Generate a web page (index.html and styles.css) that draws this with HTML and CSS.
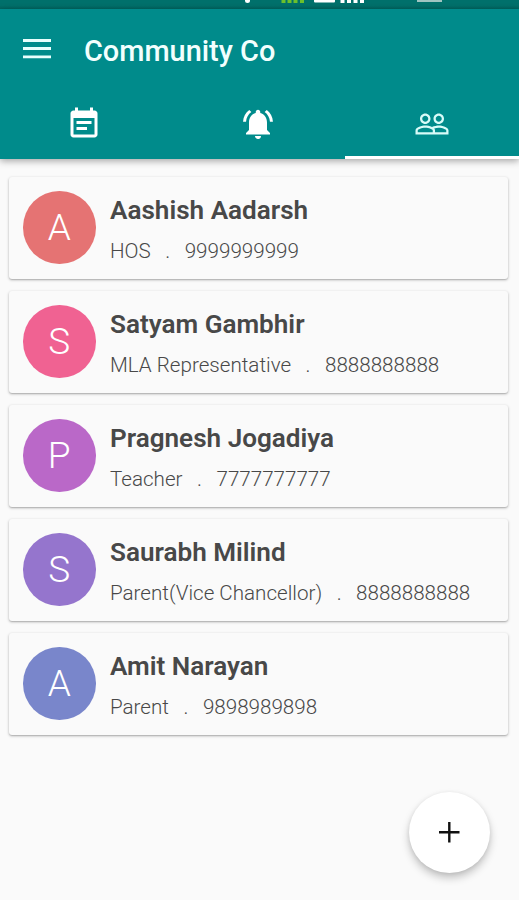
FILE: index.html
```html
<!DOCTYPE html>
<html lang="en">

<head>
    <meta charset="UTF-8">
    <meta name="viewport" content="width=device-width, initial-scale=1.0">
    <title>Community Co</title>
    <link rel="stylesheet" href="styles.css">
</head>

<body>
    <div class="status-bar">
        <svg width="519" height="9" viewBox="0 0 519 9">
            <circle cx="247.500" cy="0.500" r="2.500" fill="#fff"/>
            <path d="M283.500 0v3M289.500 0v3M295.500 0v3M302 0v3" stroke="#6cc02c" stroke-width="4"/>
            <path d="M314 0h21v1.500q0 1-1 1h-19q-1 0-1-1z" fill="#fff"/>
            <path d="M342.500 0v3M349 0v3M355.500 0v3M362 0v3" stroke="#fff" stroke-width="4"/>
            <rect x="417" y="0" width="25" height="2" fill="#9fc4c1"/>
        </svg>
    </div>

    <header class="header">
        <div class="toolbar">
            <svg class="menu-icon" width="28" height="21" viewBox="0 0 28 21">
                <path d="M0 2.500h28M0 10.500h28M0 18.800h28" stroke="#e8fffd" stroke-width="2.800"/>
            </svg>
            <h1>Community Co</h1>
        </div>
        <nav class="tabs">
            <a class="tab">
                <svg width="36" height="36" viewBox="0 0 24 24" fill="#fff">
                    <path d="M17 10H7v2h10v-2zm2-7h-1V1h-2v2H8V1H6v2H5c-1.110 0-1.990.9-1.990 2L3 19c0 1.100.89 2 2 2h14c1.100 0 2-.9 2-2V5c0-1.100-.9-2-2-2zm0 16H5V8h14v11zm-5-5H7v2h7v-2z"/>
                </svg>
            </a>
            <a class="tab">
                <svg width="36" height="36" viewBox="0 0 24 24" fill="#fff">
                    <path d="M7.580 4.080L6.150 2.650C3.750 4.480 2.170 7.300 2.030 10.500h2c.15-2.650 1.510-4.970 3.550-6.420zm12.390 6.420h2c-.15-3.200-1.730-6.020-4.120-7.850l-1.420 1.430c2.020 1.450 3.390 3.770 3.540 6.420zM18 11c0-3.070-1.640-5.640-4.500-6.320V4c0-.83-.67-1.500-1.500-1.500s-1.500.67-1.500 1.500v.68C7.630 5.360 6 7.920 6 11v5l-2 2v1h16v-1l-2-2v-5zm-6 11c.14 0 .27-.01.4-.04.65-.14 1.180-.58 1.440-1.180.1-.24.15-.5.15-.78h-4c.01 1.100.9 2 2.010 2z"/>
                </svg>
            </a>
            <a class="tab active">
                <svg width="36" height="36" viewBox="0 0 24 24" fill="#d8fbf8">
                    <path d="M16.500 13c-1.200 0-3.070.34-4.500 1-1.430-.67-3.300-1-4.500-1C5.330 13 1 14.080 1 16.250V19h22v-2.750c0-2.170-4.330-3.250-6.500-3.250zm-4 4.500h-10v-1.250c0-.54 2.560-1.750 5-1.750s5 1.210 5 1.750v1.250zm9 0H14v-1.250c0-.46-.2-.86-.52-1.220.88-.3 1.960-.53 3.020-.53 2.440 0 5 1.210 5 1.750v1.250zM7.500 12c1.930 0 3.500-1.570 3.500-3.500S9.430 5 7.500 5 4 6.570 4 8.500 5.570 12 7.500 12zm0-5.500c1.100 0 2 .9 2 2s-.9 2-2 2-2-.9-2-2 .9-2 2-2zm9 5.500c1.930 0 3.500-1.570 3.500-3.500S18.430 5 16.500 5 13 6.570 13 8.500s1.570 3.500 3.500 3.500zm0-5.500c1.100 0 2 .9 2 2s-.9 2-2 2-2-.9-2-2 .9-2 2-2z"/>
                </svg>
            </a>
        </nav>
    </header>

    <main class="contacts">
        <div class="card">
            <div class="avatar red">A</div>
            <div class="info">
                <h2>Aashish Aadarsh</h2>
                <p><span>HOS</span><span class="dot">.</span><span>9999999999</span></p>
            </div>
        </div>
        <div class="card">
            <div class="avatar pink">S</div>
            <div class="info">
                <h2>Satyam Gambhir</h2>
                <p><span>MLA Representative</span><span class="dot">.</span><span>8888888888</span></p>
            </div>
        </div>
        <div class="card">
            <div class="avatar purple">P</div>
            <div class="info">
                <h2>Pragnesh Jogadiya</h2>
                <p><span>Teacher</span><span class="dot">.</span><span>7777777777</span></p>
            </div>
        </div>
        <div class="card">
            <div class="avatar violet">S</div>
            <div class="info">
                <h2>Saurabh Milind</h2>
                <p><span>Parent(Vice Chancellor)</span><span class="dot">.</span><span>8888888888</span></p>
            </div>
        </div>
        <div class="card">
            <div class="avatar blue">A</div>
            <div class="info">
                <h2>Amit Narayan</h2>
                <p><span>Parent</span><span class="dot">.</span><span>9898989898</span></p>
            </div>
        </div>
    </main>

    <button class="add-button" aria-label="Add">
        <svg width="21" height="21" viewBox="0 0 21 21">
            <path d="M10.300 0v20.500M0 10.300h20.500" stroke="#111" stroke-width="2.400"/>
        </svg>
    </button>
</body>

</html>
```
FILE: styles.css
```css
* {
    box-sizing: border-box;
}

body {
    margin: 0;
    height: 900px;
    overflow: hidden;
    background-color: #fafafa;
    font-family: Roboto, "Liberation Sans", sans-serif;
    color: #484848;
}

.status-bar {
    height: 9px;
    background: linear-gradient(#00706b 60%, #006560);
}

.status-bar svg {
    display: block;
}

.header {
    height: 150px;
    background-color: #008b8b;
    box-shadow: 0 2px 7px rgba(0, 0, 0, 0.35);
}

.toolbar {
    display: flex;
    align-items: center;
    height: 79px;
    padding-left: 23px;
}

.menu-icon {
    margin-right: 33px;
}

h1 {
    margin: 5px 0 0;
    font-size: 28.9px;
    font-weight: 500;
    color: #f2fffe;
}

.tabs {
    display: flex;
    height: 71px;
    margin-left: -3px;
}

.tab {
    display: flex;
    flex: 1;
    justify-content: center;
    padding-top: 18px;
    border-bottom: 3px solid transparent;
}

.tab.active {
    border-bottom-color: #fff;
}

.contacts {
    display: flex;
    flex-direction: column;
    gap: 12px;
    padding: 18px 11px 0 9px;
}

.card {
    display: flex;
    height: 102px;
    padding: 14px;
    background-color: #fafafa;
    border-radius: 3px;
    box-shadow: 0 1px 3px rgba(0, 0, 0, 0.28), 0 1px 1px rgba(0, 0, 0, 0.1);
}

.avatar {
    width: 72.5px;
    height: 72.5px;
    margin-right: 14.5px;
    border-radius: 50%;
    font-size: 37px;
    font-weight: 300;
    line-height: 73px;
    text-align: center;
    color: #fff;
}

.red {
    background-color: #e57373;
}

.pink {
    background-color: #f06292;
}

.purple {
    background-color: #ba68c8;
}

.violet {
    background-color: #9575cd;
}

.blue {
    background-color: #7986cb;
}

.info h2 {
    margin: 3px 0 0;
    font-size: 26.1px;
    font-weight: 600;
    line-height: 32px;
    white-space: nowrap;
}

.info p {
    margin: 13px 0 0;
    font-size: 20.6px;
    font-weight: 350;
    line-height: 24px;
    white-space: nowrap;
}

.dot {
    margin: 0 14.5px;
}

.add-button {
    position: absolute;
    left: 409px;
    top: 792px;
    display: flex;
    align-items: center;
    justify-content: center;
    width: 81px;
    height: 81px;
    padding: 0;
    border: none;
    border-radius: 50%;
    background-color: #fff;
    box-shadow: 0 5px 9px rgba(0, 0, 0, 0.22), 0 1px 4px rgba(0, 0, 0, 0.08);
}
```
